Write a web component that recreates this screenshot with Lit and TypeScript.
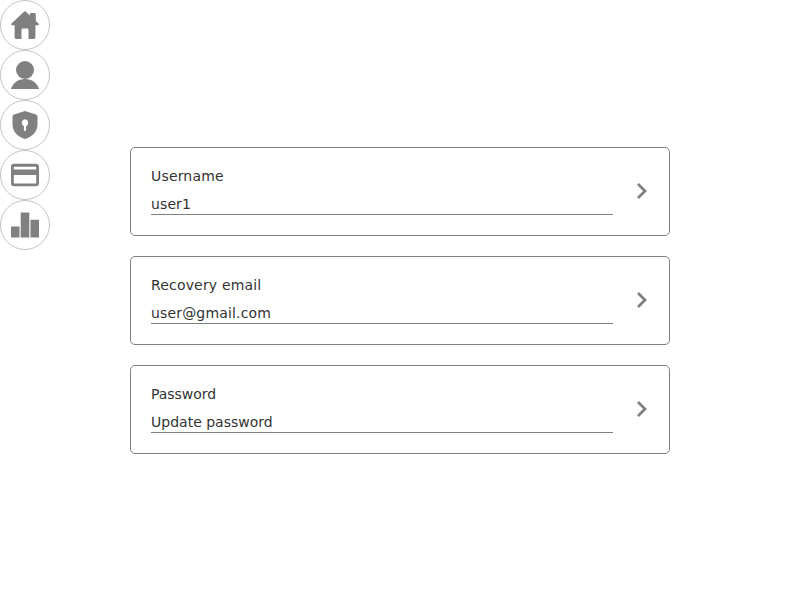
import { LitElement, html, css, svg } from "lit";
import { customElement } from "lit/decorators.js";
import { styleMap } from "lit/directives/style-map.js";

const icons = [
  // home
  svg`<path d="M13 .7Q14 -.2 15 .7L18.9 4.4V3.2Q18.9 2 20.1 2H23.6Q24.8 2 24.8 3.2V10L27.8 12.8Q28.3 14 27 14.2H24.4V26.6Q24.4 28 23 28H17.5V18.8Q17.5 17.5 16.2 17.5H11.9Q10.5 17.5 10.5 18.8V28H5Q3.6 28 3.6 26.6V14.2H1Q-.3 14 .2 12.8Z"/>`,
  // user
  svg`<circle cx="14" cy="9" r="9"/><path d="M0 28C1.8 22 7 18 14 18S26.2 22 28 28Z"/>`,
  // shield
  svg`<path fill-rule="evenodd" d="M14 0L25 3.6Q26.5 4.2 26.5 5.6V13C26.5 20.5 21.5 26 14 28C6.5 26 1.5 20.5 1.5 13V5.6Q1.5 4.2 3 3.6ZM14 8.3A3.5 3.5 0 0 0 12.9 15V19.2Q12.9 20 14 20T15.1 19.2V15A3.5 3.5 0 0 0 14 8.3Z"/>`,
  // card
  svg`<path fill-rule="evenodd" d="M3 2.8H25Q28 2.8 28 5.8V22.3Q28 25.3 25 25.3H3Q0 25.3 0 22.3V5.8Q0 2.8 3 2.8ZM2.8 5.7V8.5H25.2V5.7ZM2.8 14V22.5H25.2V14Z"/>`,
  // chart
  svg`<path d="M0 15.5H8.5V26.5H0ZM9.7 1.5H18.3V26.5H9.7ZM19.5 8.7H28V26.5H19.5Z"/>`,
];

interface Line {
  text: string;
  tracking: number;
}

const fields: { label: Line; value: Line }[] = [
  { label: { text: "Username", tracking: 0.17 }, value: { text: "user1", tracking: 0.11 } },
  { label: { text: "Recovery email", tracking: 0.17 }, value: { text: "user@gmail.com", tracking: 0.16 } },
  { label: { text: "Password", tracking: -0.03 }, value: { text: "Update password", tracking: 0.01 } },
];

const tracked = (line: Line) => styleMap({ letterSpacing: `${line.tracking}px` });

@customElement("app-root")
export class AppRoot extends LitElement {
  static styles = css`
    :host {
      display: block;
      position: relative;
      height: 600px;
      background: #fff;
      color: #333;
      font: 14px/16px "DejaVu Sans", sans-serif;
    }
    * { box-sizing: border-box; }
    nav {
      position: absolute;
      top: 0;
      left: 0;
      display: flex;
      flex-direction: column;
    }
    .item {
      display: flex;
      align-items: center;
      justify-content: center;
      width: 50px;
      height: 50px;
      border: 1px solid #c4c4c4;
      border-radius: 50%;
    }
    svg { display: block; fill: #808080; overflow: visible; }
    main {
      display: flex;
      flex-direction: column;
      align-items: center;
      gap: 20px;
      padding-top: 147px;
    }
    .card {
      display: flex;
      align-items: center;
      justify-content: space-between;
      width: 540px;
      height: 89px;
      padding: 20px;
      border: 1px solid #808080;
      border-radius: 5px;
    }
    .field {
      display: flex;
      flex-direction: column;
      gap: 12px;
      width: 462px;
    }
    .value {
      height: 19px;
      border-bottom: 1px solid #808080;
    }
    .chevron {
      fill: none;
      stroke: #808080;
      stroke-width: 2.8;
    }
  `;

  render() {
    return html`
      <nav>
        ${icons.map((icon) => html`<div class="item"><svg width="28" height="28" viewBox="0 0 28 28">${icon}</svg></div>`)}
      </nav>
      <main>
        ${fields.map(
          ({ label, value }) => html`<section class="card">
            <div class="field">
              <div style=${tracked(label)}>${label.text}</div>
              <div class="value" style=${tracked(value)}>${value.text}</div>
            </div>
            <svg class="chevron" width="14" height="18" viewBox="0 0 14 18"><path d="M3 1.1L10 8L3 14.9"/></svg>
          </section>`
        )}
      </main>
    `;
  }
}
